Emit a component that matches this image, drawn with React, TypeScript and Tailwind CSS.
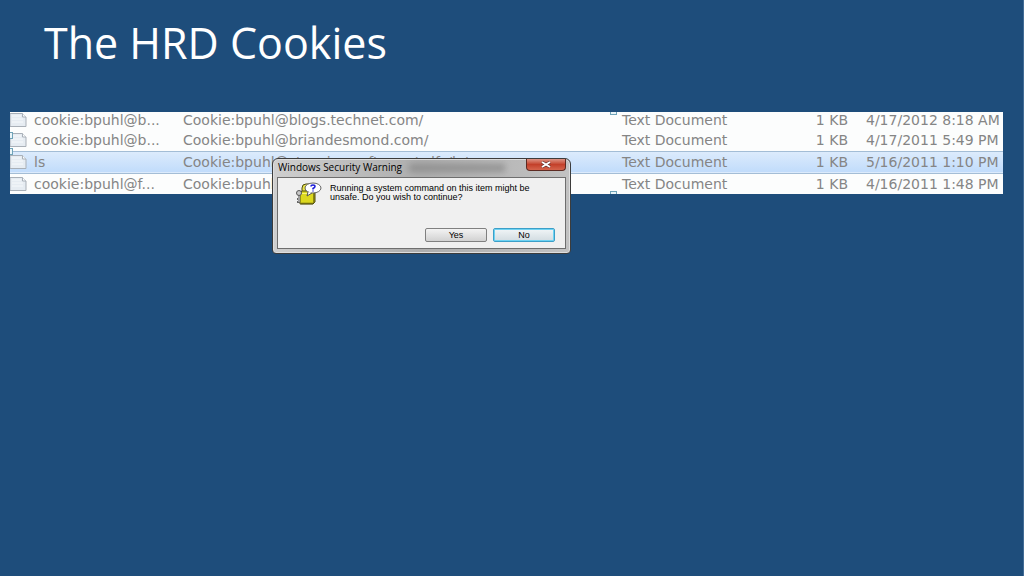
type Cookie = {
  name: string;
  address: string;
  size: string;
  modified: string;
  selected?: boolean;
};

const cookies: Cookie[] = [
  {
    name: "cookie:bpuhl@b...",
    address: "Cookie:bpuhl@blogs.technet.com/",
    size: "1 KB",
    modified: "4/17/2012 8:18 AM",
  },
  {
    name: "cookie:bpuhl@b...",
    address: "Cookie:bpuhl@briandesmond.com/",
    size: "1 KB",
    modified: "4/17/2011 5:49 PM",
  },
  {
    name: "ls",
    address: "Cookie:bpuhl@sts.microsoft.com/adfs/ls/",
    size: "1 KB",
    modified: "5/16/2011 1:10 PM",
    selected: true,
  },
  {
    name: "cookie:bpuhl@f...",
    address: "Cookie:bpuhl@",
    size: "1 KB",
    modified: "4/16/2011 1:48 PM",
  },
];

const FileIcon = () => (
  <svg width="17" height="16" viewBox="0 0 17 16" className="shrink-0">
    <path d="M0 1.5H12.5L16 5V14.5H0Z" fill="#e6ecf2" stroke="#a9b0b8" />
    <path d="M12.5 1.5V5H16" fill="#fafcfd" stroke="#a9b0b8" />
    <path d="M2 4H11M2 7H13M2 10H13" stroke="#f6f9fb" />
  </svg>
);

const LockIcon = () => (
  <svg width="28" height="24" viewBox="0 0 28 24" className="shrink-0">
    <path d="M8 11V6Q8 2 12 2H16V5H12V11" fill="#e8e34a" stroke="#4c4a10" />
    <path d="M6 11L8 9H21V20L19 22H6Z" fill="#dcd81e" stroke="#4c4a10" />
    <path d="M20 11V21M7 21.5H19" stroke="#6d6a10" strokeWidth="1.5" />
    <path d="M8 11.5H18" stroke="#f7f57c" />
    <ellipse cx="19" cy="6" rx="8" ry="5" fill="#fff" stroke="#666" />
    <path d="M14 10L13 14L18 10.5Z" fill="#fff" />
    <path d="M14 10L13 14L18 11" fill="none" stroke="#555" />
    <path
      d="M17 4.5Q17 3 19 3T21 4.5Q21 5.5 19 6.5V7.5M19 8.5V9.5"
      fill="none"
      stroke="#1c1cd8"
      strokeWidth="1.5"
    />
    <circle cx="5" cy="11" r="2.5" fill="#c9c9c9" stroke="#555" />
    <path d="M5 13V21M5 17H3M5 20H3" stroke="#666" strokeWidth="2" />
    <path d="M5 14V20" stroke="#d8d8d8" />
  </svg>
);

const CookieTable = () => (
  <table className="-mt-[3px] w-full table-fixed border-collapse bg-[#fcfdfd] text-[14px] leading-4 text-[#858585]">
    <colgroup>
      <col className="w-[173px]" />
      <col />
      <col className="w-[170px]" />
      <col className="w-14" />
      <col className="w-[155px]" />
    </colgroup>
    <tbody className="whitespace-nowrap">
      {cookies.map((cookie) => (
        <tr
          key={cookie.modified}
          className={
            cookie.selected
              ? "h-[22px] border-y border-[#a3bdd6] bg-linear-to-b from-[#dcebfc] to-[#c1dcfb]"
              : "h-[21px]"
          }
        >
          <td className="p-0">
            <div className="flex items-center gap-[7px]">
              <FileIcon />
              {cookie.name}
            </div>
          </td>
          <td className="p-0">{cookie.address}</td>
          <td className="p-0">Text Document</td>
          <td className="p-0 text-right">{cookie.size}</td>
          <td className="p-0 pl-[18px]">{cookie.modified}</td>
        </tr>
      ))}
    </tbody>
  </table>
);

const SecurityWarning = () => (
  <section
    role="dialog"
    aria-labelledby="warning-title"
    className="absolute top-[46px] left-[262px] w-[299px] rounded-t-md rounded-b-sm border border-[#3c3c3c] bg-linear-to-r from-[#cfcfcf] via-[#adadad] to-[#c2c2c2] px-1 pb-1 text-black shadow-[inset_0_0_0_1px_#dedede]"
  >
    <span className="absolute top-[5px] left-[136px] h-2 w-24 bg-[#858585] opacity-70 blur-[3px]" />
    <header className="relative flex h-[18px] items-start justify-between pl-px">
      <h2 id="warning-title" className="font-['Open_Sans'] text-[10px] leading-[17px]">
        Windows Security Warning
      </h2>
      <button
        aria-label="Close"
        className="flex h-3 w-10 items-center justify-center rounded-b-sm border border-t-0 border-[#5d2a22] bg-linear-to-b from-[#dd9384] via-[#c3402a] to-[#d5644c]"
      >
        <svg width="10" height="7" viewBox="0 0 10 7">
          <path d="M1 1L9 6M9 1L1 6" stroke="#5a2a26" strokeWidth="3" />
          <path d="M1 1L9 6M9 1L1 6" stroke="#fff" strokeWidth="2" />
        </svg>
      </button>
    </header>
    <div className="relative border border-[#6e6e6e] bg-[#f0f0f0] px-[10px] pt-1 pb-[6px] font-['Liberation_Sans'] text-[9px]">
      <div className="flex gap-2 pl-[6px]">
        <LockIcon />
        <p className="pt-[2px] leading-[9px]">
          Running a system command on this item might be
          <br />
          unsafe. Do you wish to continue?
        </p>
      </div>
      <div className="mt-[22px] flex justify-end gap-[6px]">
        <button className="h-[14px] w-[62px] rounded-xs border border-[#808080] bg-linear-to-b from-[#f3f3f3] to-[#d2d2d2] leading-3">
          Yes
        </button>
        <button className="h-[14px] w-[62px] rounded-xs border border-[#3c9fc8] bg-linear-to-b from-[#f1f5f7] to-[#d2dce1] leading-3 shadow-[inset_0_0_0_1px_#6fd3f3]">
          No
        </button>
      </div>
    </div>
  </section>
);

// Picture resize handles left visible on the slide
const Handle = ({ className }: { className: string }) => (
  <span className={`absolute size-[7px] border border-[#6fa3b8] bg-[#e9f4f8] ${className}`} />
);

const App = () => {
  return (
    <main className="min-h-screen border-r border-[#426c95] bg-[#1e4d7b]">
      <h1 className="px-11 pt-[10px] font-['Open_Sans'] text-[43px] leading-[66px] font-normal text-white">
        The HRD Cookies
      </h1>
      <div className="relative mt-9 mr-5 ml-[10px] font-['DejaVu_Sans']">
        <div className="relative overflow-hidden">
          <CookieTable />
          <Handle className="-top-1 left-[600px]" />
          <Handle className="-bottom-1 left-[600px]" />
          <Handle className="-left-1 top-5" />
          <Handle className="-left-1 top-9" />
        </div>
        <SecurityWarning />
      </div>
    </main>
  );
};

export default App;
